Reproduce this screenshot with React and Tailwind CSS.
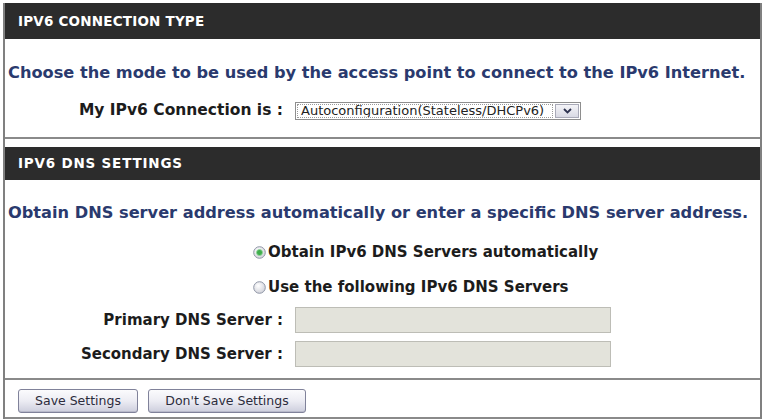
import React from 'react';

const font = { fontFamily: '"DejaVu Sans", Verdana, sans-serif' };

const Radio = ({ checked }) => (
  <svg width="13" height="13" viewBox="0 0 13 13" className="shrink-0">
    <defs>
      <radialGradient id={checked ? 'rg1' : 'rg2'} cx="40%" cy="35%" r="70%">
        <stop offset="0%" stopColor="#ffffff" />
        <stop offset="100%" stopColor="#cfd0d8" />
      </radialGradient>
    </defs>
    <circle cx="6.5" cy="6.5" r="5.8" fill={`url(#${checked ? 'rg1' : 'rg2'})`} stroke="#8f96a6" strokeWidth="1" />
    {checked && <circle cx="6.5" cy="6.5" r="3" fill="#3fae4c" stroke="#8fd49a" strokeWidth="0.8" />}
  </svg>
);

const Header = ({ children, h, track }) => (
  <div className={`${h} bg-[#2c2c2c] flex items-center pl-[13px]`}>
    <span className={`text-white font-bold text-[13.5px] ${track}`}>{children}</span>
  </div>
);

const Button = ({ children, w }) => (
  <button
    className={`${w} h-[24px] rounded-[3px] border border-[#80829a] bg-gradient-to-b from-[#fbfbfd] via-[#ececf3] to-[#cdcedd] text-[12.5px] text-[#2c2c3c] shadow-[inset_0_-1px_0_#b9bacb]`}
  >
    {children}
  </button>
);

const Label = ({ children, size }) => (
  <div className={`w-[282px] text-right ${size} font-bold text-[#1c1c1c] pr-[4px] whitespace-nowrap`}>{children}</div>
);

export default function App() {
  return (
    <div className="w-[765px] h-[420px] bg-white pt-[3px] px-[3px] overflow-hidden" style={font}>
      <div className="border-x-2 border-[#808080]">
        {/* IPv6 connection type */}
        <Header h="h-[36px]" track="tracking-[0.2px]">IPV6 CONNECTION TYPE</Header>
        <div className="h-[100px] border-b-2 border-[#8a8a8a] pt-[22px]">
          <div className="h-[24px] flex items-center pl-[3px] text-[16.2px] font-bold text-[#2a3a6e] whitespace-nowrap">
            Choose the mode to be used by the access point to connect to the IPv6 Internet.
          </div>
          <div className="mt-[17px] h-[18px] flex items-center">
            <Label size="text-[15.5px]">My IPv6 Connection is :</Label>
            <div className="ml-[8px] w-[286px] h-[18px] border border-[#8e8e8e] bg-white flex items-stretch">
              <div className="flex-1 m-[1px] border border-dotted border-[#9a9a9a] flex items-center pl-[3px] text-[13px] text-[#222] whitespace-nowrap overflow-hidden">
                Autoconfiguration(Stateless/DHCPv6)
              </div>
              <div className="w-[24px] m-[1px] border border-[#a9aab8] bg-gradient-to-b from-[#f4f4f8] to-[#d9dae4] flex items-center justify-center">
                <svg width="9" height="6" viewBox="0 0 9 6">
                  <path d="M1 1 L4.5 4.5 L8 1" fill="none" stroke="#2e3350" strokeWidth="1.8" />
                </svg>
              </div>
            </div>
          </div>
        </div>
        <div className="h-[8px]" />
        {/* IPv6 DNS settings */}
        <Header h="h-[33px]" track="tracking-[0.8px]">IPV6 DNS SETTINGS</Header>
        <div className="pt-[21px] pb-[11px] border-b-2 border-[#8a8a8a]">
          <div className="h-[24px] flex items-center pl-[3px] text-[16.2px] font-bold text-[#2a3a6e] whitespace-nowrap">
            Obtain DNS server address automatically or enter a specific DNS server address.
          </div>
          <div className="mt-[15px] h-[24px] flex items-center gap-[2px] pl-[248px] text-[15px] font-bold text-[#1c1c1c]">
            <Radio checked />
            <span>Obtain IPv6 DNS Servers automatically</span>
          </div>
          <div className="mt-[11px] h-[24px] flex items-center gap-[2px] pl-[248px] text-[15px] font-bold text-[#1c1c1c]">
            <Radio />
            <span>Use the following IPv6 DNS Servers</span>
          </div>
          <div className="mt-[8px] h-[26px] flex items-center">
            <Label size="text-[15px]">Primary DNS Server :</Label>
            <div className="ml-[8px] w-[316px] h-[26px] bg-[#e3e3db] border border-[#bdbdb6]" />
          </div>
          <div className="mt-[8px] h-[26px] flex items-center">
            <Label size="text-[15px]">Secondary DNS Server :</Label>
            <div className="ml-[8px] w-[316px] h-[26px] bg-[#e3e3db] border border-[#bdbdb6]" />
          </div>
        </div>
        {/* footer buttons */}
        <div className="pt-[9px] pb-[4px] pl-[13px] flex gap-[10px] border-b-2 border-[#8a8a8a]">
          <Button w="w-[120px]">Save Settings</Button>
          <Button w="w-[158px]">Don't Save Settings</Button>
        </div>
      </div>
    </div>
  );
}
